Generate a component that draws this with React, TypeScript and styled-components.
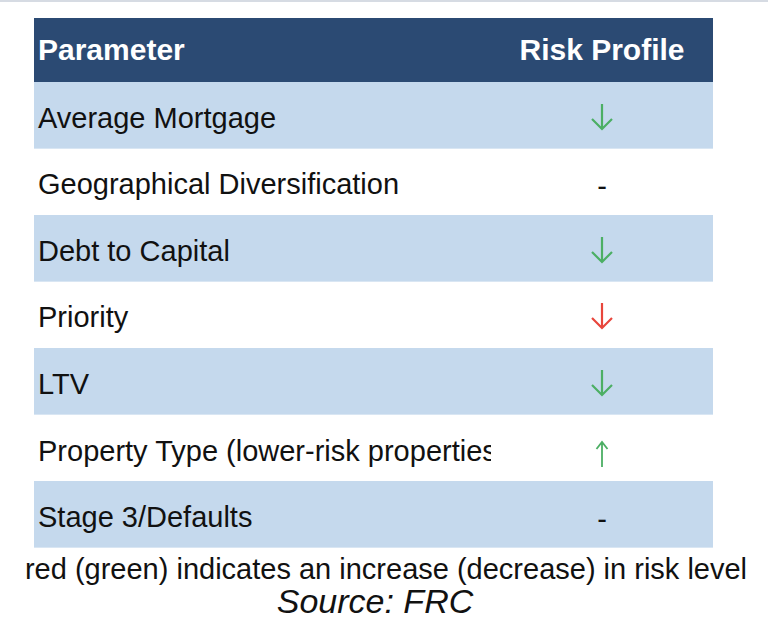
import styled, { createGlobalStyle } from "styled-components";

const GlobalStyle = createGlobalStyle`
  html, body {
    margin: 0;
    padding: 0;
    background: #ffffff;
  }
  body {
    font-family: "Liberation Sans", Arial, sans-serif;
    color: #111111;
  }
`;

const Page = styled.div`
  width: 768px;
  height: 642px;
  display: flex;
  flex-direction: column;
  overflow: hidden;
`;

const TopRule = styled.div`
  height: 2px;
  background: #d6dbe3;
`;

const Table = styled.div`
  margin: 16px 0 0 34px;
  width: 679px;
  display: flex;
  flex-direction: column;
`;

const HeaderRow = styled.div`
  height: 64px;
  display: flex;
  align-items: center;
  background: #2b4a73;
  color: #ffffff;
  font-weight: 700;
  font-size: 30px;
`;

const Row = styled.div<{ $shaded: boolean }>`
  height: 66.57px;
  box-sizing: border-box;
  display: flex;
  align-items: center;
  background: ${(p) => (p.$shaded ? "#c5d9ed" : "#ffffff")};
  border-bottom: 1px solid ${(p) => (p.$shaded ? "#d9e6f3" : "#ffffff")};
  font-size: 29px;
`;

const ParamCell = styled.div<{ $drop?: number }>`
  width: 457px;
  padding-left: 4px;
  margin-top: ${(p) => p.$drop ?? 0}px;
  box-sizing: border-box;
  white-space: nowrap;
  overflow: hidden;
`;

const RiskCell = styled.div`
  flex: 1;
  display: flex;
  justify-content: center;
  align-items: center;
`;

const Dash = styled.span`
  margin-top: 11px;
  line-height: 1;
`;

const ArrowSvg = styled.svg<{ $shift: number }>`
  display: block;
  margin-top: ${(p) => p.$shift}px;
`;

const Caption = styled.div`
  margin-top: 6px;
  text-align: center;
  font-size: 29px;
  line-height: 30px;
  padding-left: 4px;
`;

const Source = styled.div`
  text-align: center;
  font-style: italic;
  font-size: 34px;
  line-height: 35px;
  padding-right: 18px;
`;

type Risk = "down-green" | "down-red" | "up-green" | "none";

const rows: { name: string; risk: Risk }[] = [
  { name: "Average Mortgage", risk: "down-green" },
  { name: "Geographical Diversification", risk: "none" },
  { name: "Debt to Capital", risk: "down-green" },
  { name: "Priority", risk: "down-red" },
  { name: "LTV", risk: "down-green" },
  { name: "Property Type (lower-risk properties)", risk: "up-green" },
  { name: "Stage 3/Defaults", risk: "none" },
];

const GREEN = "#4caf64";
const RED = "#e8463c";

function RiskMark({ risk }: { risk: Risk }) {
  if (risk === "none") return <Dash>-</Dash>;
  if (risk === "up-green") {
    return (
      <ArrowSvg $shift={12} width="14" height="28" viewBox="0 0 14 28">
        <path d="M7 2 V27 M1.5 9 L7 2 L12.5 9" fill="none" stroke={GREEN} strokeWidth="1.8" />
      </ArrowSvg>
    );
  }
  const color = risk === "down-red" ? RED : GREEN;
  return (
    <ArrowSvg $shift={4} width="24" height="28" viewBox="0 0 24 28">
      <path d="M12 1 V26 M2 16 L12 26 L22 16" fill="none" stroke={color} strokeWidth="2.2" />
    </ArrowSvg>
  );
}

export default function App() {
  return (
    <Page>
      <GlobalStyle />
      <TopRule />
      <Table>
        <HeaderRow>
          <ParamCell>Parameter</ParamCell>
          <RiskCell>Risk Profile</RiskCell>
        </HeaderRow>
        {rows.map((r, i) => (
          <Row key={r.name} $shaded={i % 2 === 0}>
            <ParamCell $drop={7}>{r.name}</ParamCell>
            <RiskCell>
              <RiskMark risk={r.risk} />
            </RiskCell>
          </Row>
        ))}
      </Table>
      <Caption>red (green) indicates an increase (decrease) in risk level</Caption>
      <Source>Source: FRC</Source>
    </Page>
  );
}
